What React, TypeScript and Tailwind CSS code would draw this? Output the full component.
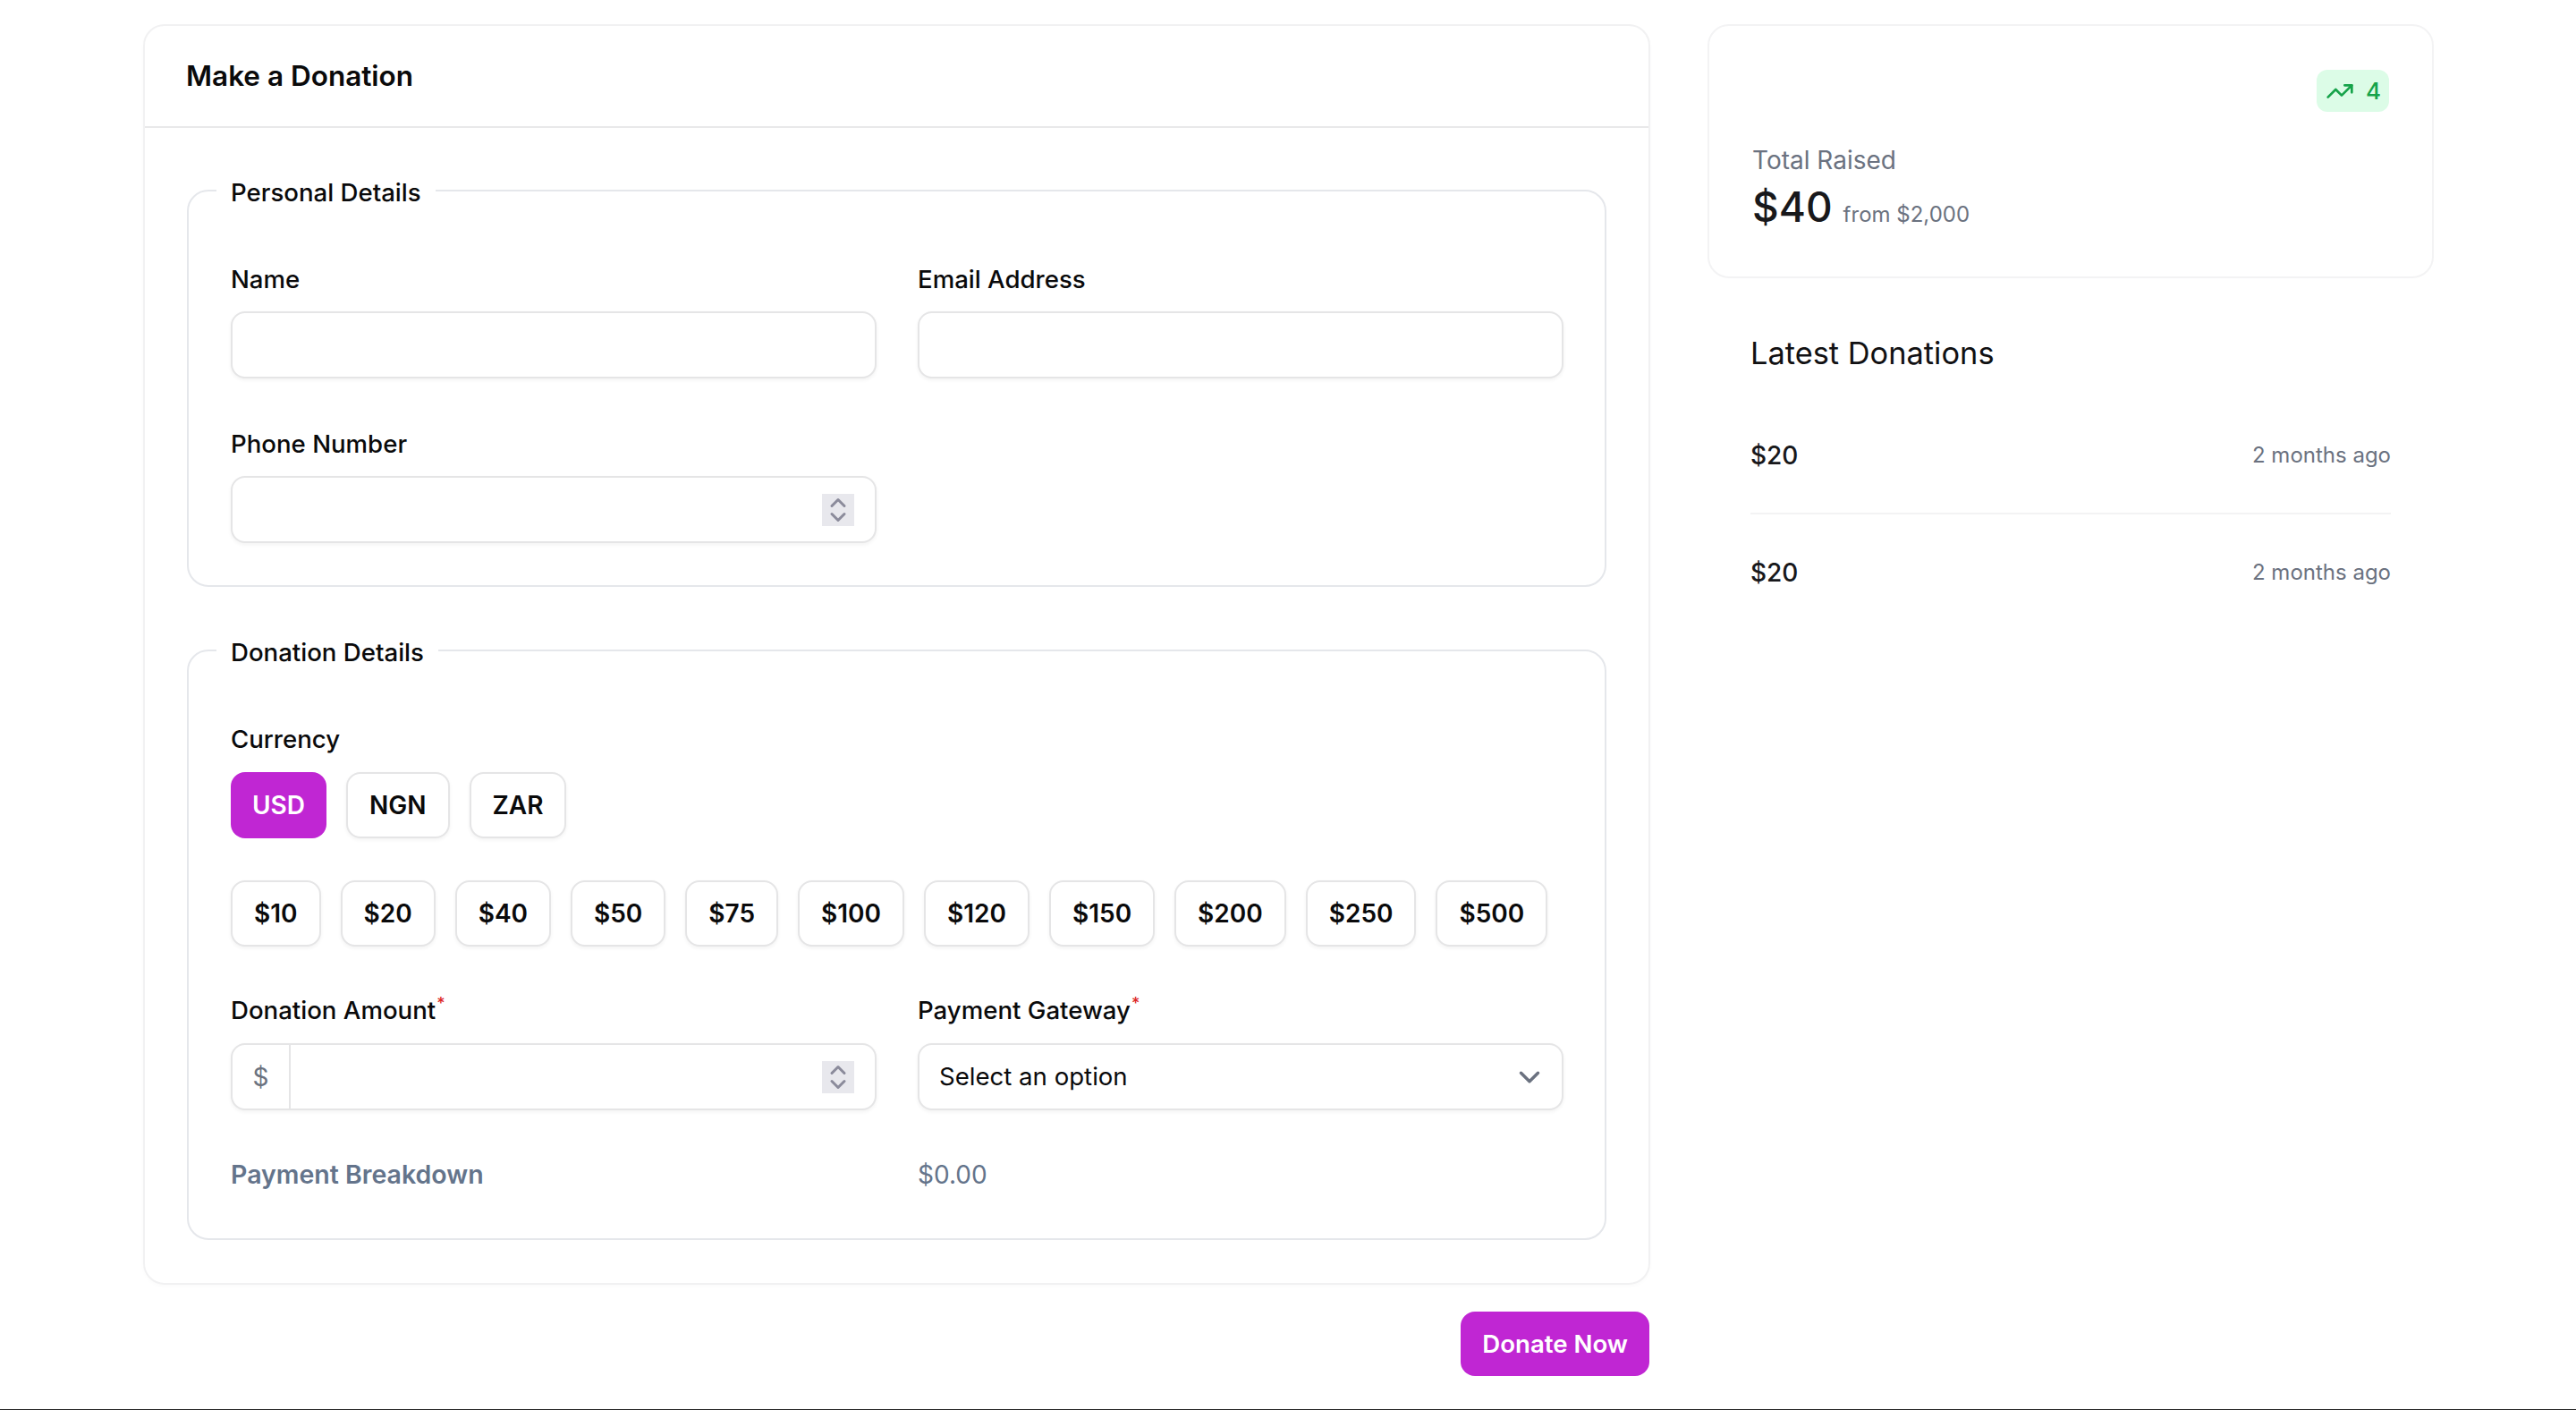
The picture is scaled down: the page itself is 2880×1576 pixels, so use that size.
import React from "react";
import { ChevronDown, ChevronUp, TrendingUp } from "lucide-react";

const currencies = ["USD", "NGN", "ZAR"];
const amounts = ["$10", "$20", "$40", "$50", "$75", "$100", "$120", "$150", "$200", "$250", "$500"];
const donations = ["$20", "$20"];

const inputBox =
  "flex items-center w-[722px] h-[75px] bg-white rounded-[16px] border-2 border-[#e5e5e6] shadow-[0_2px_4px_rgba(0,0,0,0.05)]";
const optionBtn =
  "h-[74px] flex items-center px-[24px] bg-white rounded-[16px] border-2 border-[#e5e5e6] shadow-[0_2px_4px_rgba(0,0,0,0.05)] text-[28px] font-semibold text-[#0a0a0b]";

const Spinner = () => (
  <span className="w-[36px] h-[36px] mr-[23px] ml-auto bg-[#e8e8ed] flex flex-col items-center justify-center text-[#8b8b9b]">
    <ChevronUp size={28} strokeWidth={2.6} className="-mb-[6px] shrink-0" />
    <ChevronDown size={28} strokeWidth={2.6} className="-mt-[6px] shrink-0" />
  </span>
);

const Label = ({ text, required }: { text: string; required?: boolean }) => (
  <label className="block h-[40px] leading-[44px] text-[27.6px] font-medium text-[#0a0a0b]">
    {text}
    {required && <sup className="text-[#dc2626] text-[18px] font-medium ml-[1px] -top-[11px]">*</sup>}
  </label>
);

const Section = ({ title, className, children }: { title: string; className: string; children: React.ReactNode }) => (
  <fieldset className={`min-w-0 rounded-[24px] border-2 border-[#e5e7eb] px-[47px] pt-[57px] ${className}`}>
    <legend className="-ml-[16px] px-[16px] h-[40px] leading-[44px] text-[27.6px] font-medium text-[#0a0a0b]">
      {title}
    </legend>
    {children}
  </fieldset>
);

export default function App() {
  return (
    <div className="h-[1576px] bg-white border-b border-[#222222] overflow-hidden font-['Inter',sans-serif]">
      <div className="flex items-start gap-[64px] pl-[160px] pt-[27px]">
        {/* left column */}
        <div className="w-[1685px] shrink-0">
          <div className="rounded-[24px] border-2 border-[#f1f1f2] bg-white shadow-[0_2px_4px_rgba(0,0,0,0.02)]">
            <div className="h-[114px] flex items-center px-[46px] border-b-2 border-[#e9e9ea]">
              <h2 className="text-[31.5px] font-semibold text-[#0a0a0b]">Make a Donation</h2>
            </div>
            <div className="px-[47px] pt-[50px] pb-[48px] flex flex-col gap-[51px]">
              <Section title="Personal Details" className="pb-[47px]">
                <div className="grid grid-cols-[722px_722px] gap-x-[46px] gap-y-[51px]">
                  <div>
                    <Label text="Name" />
                    <div className={`${inputBox} mt-[18px]`} />
                  </div>
                  <div>
                    <Label text="Email Address" />
                    <div className={`${inputBox} mt-[18px]`} />
                  </div>
                  <div>
                    <Label text="Phone Number" />
                    <div className={`${inputBox} mt-[18px]`}>
                      <Spinner />
                    </div>
                  </div>
                </div>
              </Section>

              <Section title="Donation Details" className="pb-[51px]">
                <Label text="Currency" />
                <div className="flex gap-[22px] mt-[19px]">
                  {currencies.map((c, i) => (
                    <button
                      key={c}
                      className={
                        i === 0
                          ? "h-[74px] flex items-center px-[24px] rounded-[16px] bg-[#c026d3] text-white text-[28px] font-semibold"
                          : optionBtn
                      }
                    >
                      {c}
                    </button>
                  ))}
                </div>
                <div className="flex gap-[22px] mt-[47px]">
                  {amounts.map((a) => (
                    <button key={a} className={optionBtn}>
                      {a}
                    </button>
                  ))}
                </div>
                <div className="grid grid-cols-[722px_722px] gap-x-[46px] mt-[49px]">
                  <div>
                    <Label text="Donation Amount" required />
                    <div className={`${inputBox} mt-[19px]`}>
                      <span className="w-[65px] h-full flex items-center justify-center border-r-2 border-[#e5e5e6] text-[28px] text-[#6b7280]">
                        $
                      </span>
                      <Spinner />
                    </div>
                  </div>
                  <div>
                    <Label text="Payment Gateway" required />
                    <div className={`${inputBox} mt-[19px] justify-between pl-[22px] pr-[17px]`}>
                      <span className="text-[27.6px] text-[#0a0a0b]">Select an option</span>
                      <ChevronDown size={38} strokeWidth={2.2} className="text-[#6b7280]" />
                    </div>
                  </div>
                </div>
                <div className="grid grid-cols-[722px_722px] gap-x-[46px] mt-[52px] text-[28px] leading-[40px] text-[#64748b]">
                  <span className="font-semibold text-[28.5px]">Payment Breakdown</span>
                  <span>$0.00</span>
                </div>
              </Section>
            </div>
          </div>
          <div className="flex justify-end mt-[30px] pr-[1px]">
            <button className="h-[72px] px-[24px] pt-[2px] rounded-[16px] bg-[#c026d3] text-white text-[27.6px] font-semibold">
              Donate Now
            </button>
          </div>
        </div>

        {/* right column */}
        <div className="w-[812px] shrink-0">
          <div className="h-[284px] rounded-[24px] border-2 border-[#f3f3f4] bg-white px-[48px] pt-[49px]">
            <div className="flex justify-end">
              <span className="w-[81px] h-[47px] flex items-center justify-between pl-[10px] pr-[9px] rounded-[12px] bg-[#dcfce7] text-[#16a34a] text-[26px] font-medium">
                <TrendingUp size={32} strokeWidth={2} />4
              </span>
            </div>
            <p className="mt-[34px] text-[28px] leading-[40px] text-[#6b7280]">Total Raised</p>
            <p className="flex items-baseline gap-[12px] leading-[64px]">
              <span className="text-[46px] font-medium text-[#18181b]">$40</span>
              <span className="text-[24px] text-[#6b7280]">from $2,000</span>
            </p>
          </div>

          <div className="px-[48px] pt-[60px]">
            <h3 className="text-[34.4px] leading-[48px] text-[#111113]">Latest Donations</h3>
            <div className="mt-[26px] flex flex-col">
              {donations.map((d, i) => (
                <div
                  key={i}
                  className={`h-[130px] flex items-center justify-between ${i === 0 ? "border-b-2 border-[#f3f3f4]" : ""}`}
                >
                  <span className="text-[28px] font-medium text-[#18181b]">{d}</span>
                  <span className="text-[24px] text-[#6b7280]">2 months ago</span>
                </div>
              ))}
            </div>
          </div>
        </div>
      </div>
    </div>
  );
}
